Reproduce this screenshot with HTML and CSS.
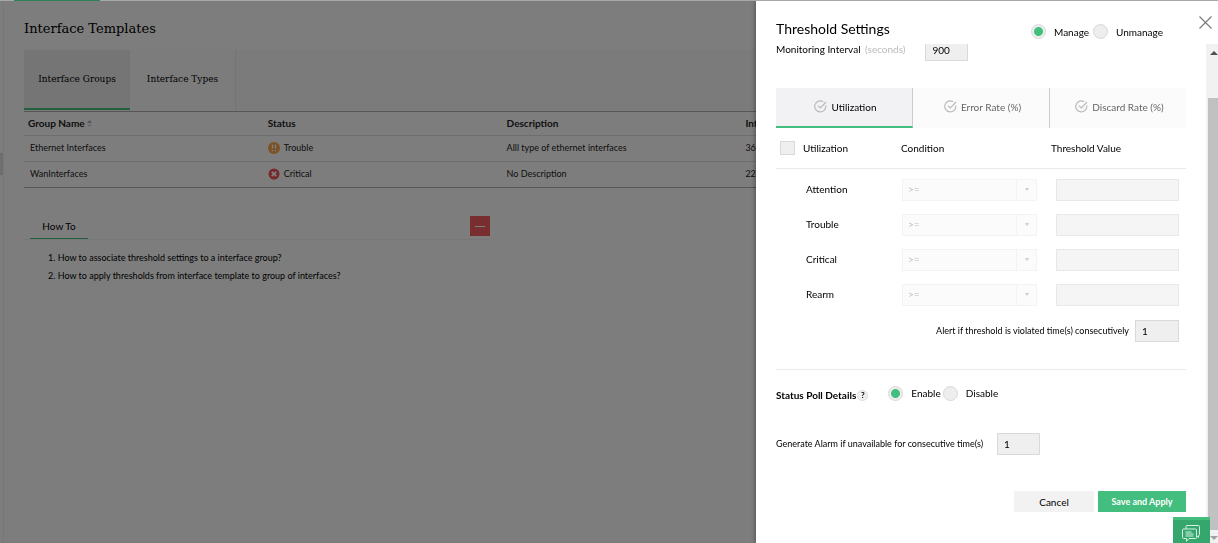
FILE: index.html
```html
<!DOCTYPE html>
<html lang="en">
<head>
    <meta charset="UTF-8">
    <meta name="viewport" content="width=device-width, initial-scale=1.0">
    <title>Interface Templates</title>
    <link rel="stylesheet" href="styles.css">
</head>
<body>
    <div class="top-line"><span class="top-active"></span></div>
    <div class="page">
        <div class="side-strip"><span class="side-handle"></span></div>
        <main class="main">
            <h1>Interface Templates</h1>

            <nav class="tabs">
                <a class="tab active" href="#groups">Interface Groups</a>
                <a class="tab" href="#types">Interface Types</a>
            </nav>

            <table class="groups">
                <thead>
                    <tr>
                        <th>Group Name
                            <svg class="sort" width="5" height="7" viewBox="0 0 5 7"><path d="M0 3L2.500 0L5 3Z" fill="#aaa"/><path d="M0 4.500H5L2.500 7Z" fill="#ccc"/></svg>
                        </th>
                        <th>Status</th>
                        <th>Description</th>
                        <th>Interfaces</th>
                        <th>Actions</th>
                    </tr>
                </thead>
                <tbody>
                    <tr>
                        <td>Ethernet Interfaces</td>
                        <td>
                            <span class="status">
                                <svg width="12" height="12" viewBox="0 0 12 12"><circle cx="6" cy="6" r="6" fill="#f5a54b"/><path d="M4.500 2.500V6.500M7.500 2.500V6.500M4.500 8V9.300M7.500 8V9.300" stroke="#fff" stroke-width="1.300"/></svg>
                                Trouble
                            </span>
                        </td>
                        <td>Alll type of ethernet interfaces</td>
                        <td>364</td>
                        <td></td>
                    </tr>
                    <tr>
                        <td>WanInterfaces</td>
                        <td>
                            <span class="status">
                                <svg width="12" height="12" viewBox="0 0 12 12"><circle cx="6" cy="6" r="5.500" fill="#ee5057"/><path d="M3.800 3.800L8.200 8.200M8.200 3.800L3.800 8.200" stroke="#fff" stroke-width="1.800"/></svg>
                                Critical
                            </span>
                        </td>
                        <td>No Description</td>
                        <td>224</td>
                        <td></td>
                    </tr>
                </tbody>
            </table>

            <section class="howto">
                <div class="howto-head">
                    <h2>How To</h2>
                    <button class="collapse" type="button" aria-label="Collapse"></button>
                </div>
                <ol>
                    <li>How to associate threshold settings to a interface group?</li>
                    <li>How to apply thresholds from interface template to group of interfaces?</li>
                </ol>
            </section>
        </main>
    </div>

    <div class="overlay"></div>

    <!-- Threshold drawer -->
    <form class="panel">
        <div class="panel-head">
            <h2>Threshold Settings</h2>
            <div class="radios">
                <label><input type="radio" name="manage" checked> Manage</label>
                <label><input type="radio" name="manage"> Unmanage</label>
            </div>
            <button class="close" type="button" aria-label="Close">
                <svg width="13" height="13" viewBox="0 0 13 13"><path d="M0.500 0.500L12.500 12.500M12.500 0.500L0.500 12.500" stroke="#777" stroke-width="1.100"/></svg>
            </button>
        </div>

        <div class="panel-body">
            <div class="panel-content">
                <div class="interval">
                    <label for="interval">Monitoring Interval <span class="muted">(seconds)</span></label>
                    <input class="box small" id="interval" type="text" value="900">
                </div>

                <div class="metric-tabs">
                    <button class="metric active" type="button">
                        <svg width="13" height="13" viewBox="0 0 13 13"><path d="M11.700 5.500A5.500 5.500 0 1 1 9.200 1.700M4 5.700L6.400 8L12 2" fill="none" stroke="#bbb" stroke-width="1.200"/></svg>
                        Utilization
                    </button>
                    <button class="metric" type="button">
                        <svg width="13" height="13" viewBox="0 0 13 13"><path d="M11.700 5.500A5.500 5.500 0 1 1 9.200 1.700M4 5.700L6.400 8L12 2" fill="none" stroke="#bbb" stroke-width="1.200"/></svg>
                        Error Rate (%)
                    </button>
                    <button class="metric" type="button">
                        <svg width="13" height="13" viewBox="0 0 13 13"><path d="M11.700 5.500A5.500 5.500 0 1 1 9.200 1.700M4 5.700L6.400 8L12 2" fill="none" stroke="#bbb" stroke-width="1.200"/></svg>
                        Discard Rate (%)
                    </button>
                </div>

                <div class="cols-head">
                    <label class="check"><input type="checkbox"> Utilization</label>
                    <span>Condition</span>
                    <span>Threshold Value</span>
                </div>

                <div class="rows">
                    <div class="row">
                        <label for="attention">Attention</label>
                        <span class="select"><select aria-label="Attention condition" disabled><option>&gt;=</option></select></span>
                        <input class="box" id="attention" type="text" disabled>
                    </div>
                    <div class="row">
                        <label for="trouble">Trouble</label>
                        <span class="select"><select aria-label="Trouble condition" disabled><option>&gt;=</option></select></span>
                        <input class="box" id="trouble" type="text" disabled>
                    </div>
                    <div class="row">
                        <label for="critical">Critical</label>
                        <span class="select"><select aria-label="Critical condition" disabled><option>&gt;=</option></select></span>
                        <input class="box" id="critical" type="text" disabled>
                    </div>
                    <div class="row">
                        <label for="rearm">Rearm</label>
                        <span class="select"><select aria-label="Rearm condition" disabled><option>&gt;=</option></select></span>
                        <input class="box" id="rearm" type="text" disabled>
                    </div>
                </div>

                <div class="alert-row">
                    <label for="violated">Alert if threshold is violated time(s) consecutively</label>
                    <input class="box small" id="violated" type="text" value="1">
                </div>

                <div class="poll">
                    <strong>Status Poll Details</strong>
                    <button class="help" type="button">?</button>
                    <div class="radios">
                        <label><input type="radio" name="poll" checked> Enable</label>
                        <label><input type="radio" name="poll"> Disable</label>
                    </div>
                </div>

                <div class="alarm">
                    <label for="alarm">Generate Alarm if unavailable for consecutive time(s)</label>
                    <input class="box small" id="alarm" type="text" value="1">
                </div>

                <div class="actions">
                    <button class="cancel" type="button">Cancel</button>
                    <button class="save" type="submit">Save and Apply</button>
                </div>
            </div>

            <div class="scrollbar">
                <span class="arrow up"></span>
                <span class="thumb"></span>
                <span class="arrow down"></span>
            </div>
        </div>
    </form>

    <button class="chat" type="button" aria-label="Chat">
        <svg width="18" height="17" viewBox="0 0 18 17"><path d="M4 4V1.500Q4 .5 5 .5H16.500Q17.500 .5 17.500 1.500V9.500Q17.500 10.500 16.500 10.500V12.500L14.500 10.800M1.500 4H13.500Q14.500 4 14.500 5V12.500Q14.500 13.500 13.500 13.500H7L4.500 16.300V13.500H1.500Q.5 13.500 .5 12.500V5Q.5 4 1.500 4ZM3.500 7H9.500M3.500 9H11.500M3.500 11H11.500" fill="none" stroke="#d5f3e3"/></svg>
    </button>
</body>
</html>
```
FILE: styles.css
```css
* {
    box-sizing: border-box;
}

body {
    margin: 0;
    height: 100vh;
    overflow: hidden;
    background: #fbfbfb;
    color: #000;
    font-family: Lato, sans-serif;
    font-size: 10px;
    line-height: 14px;
}

button, input, select {
    font: inherit;
    color: inherit;
    border-radius: 0;
    margin: 0;
}

button {
    border: 0;
    padding: 0;
    cursor: pointer;
}

a {
    color: inherit;
    text-decoration: none;
}

h1, h2 {
    margin: 0;
    font-weight: normal;
}

.top-line {
    height: 1px;
    padding-left: 14px;
    background: #a8a8a8;
    position: relative;
    z-index: 2;
}

.top-active {
    display: block;
    width: 86px;
    height: 1px;
    background: #2c8256;
}

.page {
    display: flex;
    height: 100%;
}

.side-strip {
    width: 4px;
    padding-top: 152px;
    border-right: 1px solid #eee;
}

.side-handle {
    display: block;
    height: 22px;
    background: #ddd;
}

.main {
    flex: 1;
    padding: 19px 0 0 20px;
}

h1 {
    font-family: "DejaVu Serif", serif;
    font-size: 13px;
    line-height: 18px;
}

/* Page tabs */
.tabs {
    display: flex;
    height: 60px;
    margin-top: 12px;
    background: #f6f6f6;
    font-family: "DejaVu Serif", serif;
    font-size: 9px;
}

.tab {
    display: flex;
    align-items: center;
    justify-content: center;
    width: 106px;
    padding-bottom: 2px;
    background: #f9f9f9;
    border-right: 1px solid #e8e8e8;
}

.tab.active {
    padding: 0;
    background: #ebebeb;
    border-right: 0;
    border-bottom: 2px solid #43be7e;
}

/* Groups table */
.groups {
    width: 100%;
    margin-top: 1px;
    table-layout: fixed;
    border-collapse: collapse;
    border-top: 1px solid #aaa;
    border-bottom: 1px solid #aaa;
    color: #222;
}

.groups th {
    height: 24px;
    padding: 0 5px 2px;
    text-align: left;
    font-weight: bold;
}

.groups th:first-child {
    padding-left: 4px;
}

.groups td {
    height: 26px;
    padding: 0 5px 2px;
    font-size: 9px;
    border-top: 1px solid #ddd;
}

.groups td:first-child {
    padding-left: 6px;
}

.status {
    display: flex;
    align-items: center;
    gap: 4px;
}

/* How to box */
.howto {
    width: 466px;
    margin-top: 28px;
}

.howto-head {
    display: flex;
    justify-content: space-between;
    height: 24px;
    padding-left: 6px;
    border-bottom: 1px solid #eee;
}

.howto h2 {
    width: 58px;
    padding-top: 3px;
    text-align: center;
    font-size: 10px;
    border-bottom: 1px solid #43be7e;
}

.collapse {
    display: flex;
    align-items: center;
    justify-content: center;
    width: 20px;
    height: 20px;
    background: #f05a5e;
}

.collapse::before {
    content: "";
    width: 10px;
    height: 1px;
    background: #fff;
}

.howto ol {
    margin: 9px 0 0;
    padding-left: 24px;
    font-size: 9px;
    line-height: 18px;
    list-style-position: inside;
}

.overlay {
    position: fixed;
    inset: 1px 0 0 0;
    background: rgba(0, 0, 0, 0.5);
}

/* Drawer */
.panel {
    position: fixed;
    top: 1px;
    right: 0;
    bottom: 0;
    width: 462px;
    display: flex;
    flex-direction: column;
    background: #fff;
    box-shadow: 0 0 5px rgba(0, 0, 0, 0.5);
}

.panel-head {
    display: flex;
    align-items: flex-start;
    height: 43px;
    flex: none;
    padding: 15px 6px 0 20px;
}

.panel-head h2 {
    flex: 1;
    padding-top: 4px;
    font-size: 14px;
    line-height: 18px;
}

.panel-head .radios {
    padding: 8px 36px 0 0;
}

.close {
    display: flex;
    background: none;
}

.radios {
    display: flex;
    gap: 4px;
}

.radios label {
    display: flex;
    align-items: center;
    gap: 8px;
}

.radios input {
    appearance: none;
    width: 15px;
    height: 15px;
    border: 1px solid #d8d8d8;
    border-radius: 50%;
    background: #eee;
}

.radios input:checked {
    background: radial-gradient(circle, #43be7e 4px, #eee 5px);
}

.panel-body {
    display: flex;
    flex: 1;
    min-height: 0;
    overflow: hidden;
}

.panel-content {
    flex: 1;
    padding: 0 20px;
}

.interval {
    display: flex;
    align-items: center;
    gap: 20px;
    margin-top: -5px;
}

.interval label {
    padding-bottom: 2px;
}

.muted {
    color: #bbb;
    margin-left: 2px;
}

.box {
    height: 22px;
    width: 123px;
    padding: 0 6px;
    background: #efefef;
    border: 1px solid #d9d9d9;
}

.box:disabled {
    background: #f5f5f5;
    border-color: #e8e8e8;
}

.box.small {
    width: 43px;
}

.metric-tabs {
    display: flex;
    margin-top: 27px;
}

.metric {
    flex: 1;
    display: flex;
    align-items: center;
    justify-content: center;
    gap: 4px;
    height: 40px;
    padding: 0 0 3px 3px;
    background: #fbfbfb;
    color: #666;
    border-right: 1px solid #ccc;
}

.metric:last-child {
    border-right: 0;
}

.metric.active {
    background: #f2f2f4;
    color: #000;
    padding-bottom: 1px;
    border-bottom: 2px solid #43be7e;
}

.cols-head {
    display: grid;
    grid-template-columns: 125px 150px 1fr;
    align-items: center;
    height: 41px;
    border-bottom: 1px solid #eaeaea;
}

.check {
    display: flex;
    align-items: center;
    gap: 8px;
    padding-left: 4px;
}

.check input {
    appearance: none;
    width: 15px;
    height: 14px;
    background: #efefef;
    border: 1px solid #d9d9d9;
}

.rows {
    display: grid;
    gap: 13px;
    padding-top: 10px;
}

.row {
    display: grid;
    grid-template-columns: 126px 154px 1fr;
    align-items: center;
}

.row label {
    padding: 0 0 2px 30px;
}

.select {
    position: relative;
    width: 135px;
    height: 22px;
}

.select select {
    appearance: none;
    display: block;
    width: 100%;
    height: 22px;
    padding: 0 5px 2px;
    font-size: 10px;
    background: linear-gradient(#f3f3f3, #f3f3f3) 113px 0 / 1px 100% no-repeat #fbfbfb;
    border: 1px solid #f3f3f3;
    color: #bbb;
    opacity: 1;
}

.select::after {
    content: "";
    position: absolute;
    right: 8px;
    top: 9px;
    border: 2px solid transparent;
    border-top: 3px solid #ccc;
}

.alert-row {
    display: flex;
    align-items: center;
    justify-content: flex-end;
    gap: 6px;
    padding: 14px 7px 27px 0;
    border-bottom: 1px solid #eaeaea;
}

.alert-row label,
.alarm label {
    font-size: 9px;
}

.alert-row .box {
    width: 44px;
}

.poll {
    display: flex;
    align-items: center;
    height: 50px;
}

.help {
    width: 11px;
    height: 11px;
    margin: 0 20px 0 1px;
    border: 1px solid #ddd;
    border-radius: 50%;
    background: #f0f0f0;
    font-size: 8px;
    line-height: 9px;
    font-weight: bold;
}

.poll .radios {
    gap: 2px;
    padding-bottom: 4px;
}

.alarm {
    display: flex;
    align-items: center;
    margin-top: 13px;
}

.alarm label {
    width: 221px;
}

.actions {
    display: flex;
    justify-content: flex-end;
    gap: 4px;
    margin-top: 36px;
}

.cancel, .save {
    height: 21px;
    width: 80px;
    background: #f2f2f2;
}

.save {
    width: 88px;
    background: #43be7e;
    color: #fff;
    font-size: 9px;
    font-weight: bold;
}

.scrollbar {
    display: flex;
    flex-direction: column;
    align-items: flex-end;
    width: 12px;
    padding: 7px 0 3px 2px;
    background: #f1f1f1;
}

.thumb {
    flex: 1;
    width: 10px;
    margin: 43px 0 6px;
    background: #c1c1c1;
}

.arrow {
    width: 8px;
    border: 4px solid transparent;
    border-top: 0;
    border-bottom: 4px solid #505050;
}

.arrow.down {
    border-bottom: 0;
    border-top: 4px solid #a0a0a0;
}

/* Chat button */
.chat {
    position: fixed;
    right: 8px;
    bottom: 0;
    display: flex;
    align-items: flex-end;
    justify-content: center;
    width: 37px;
    height: 26px;
    padding: 0 1px 1px 0;
    border-top: 3px solid #43be7e;
    background: #35a66c;
}
```
